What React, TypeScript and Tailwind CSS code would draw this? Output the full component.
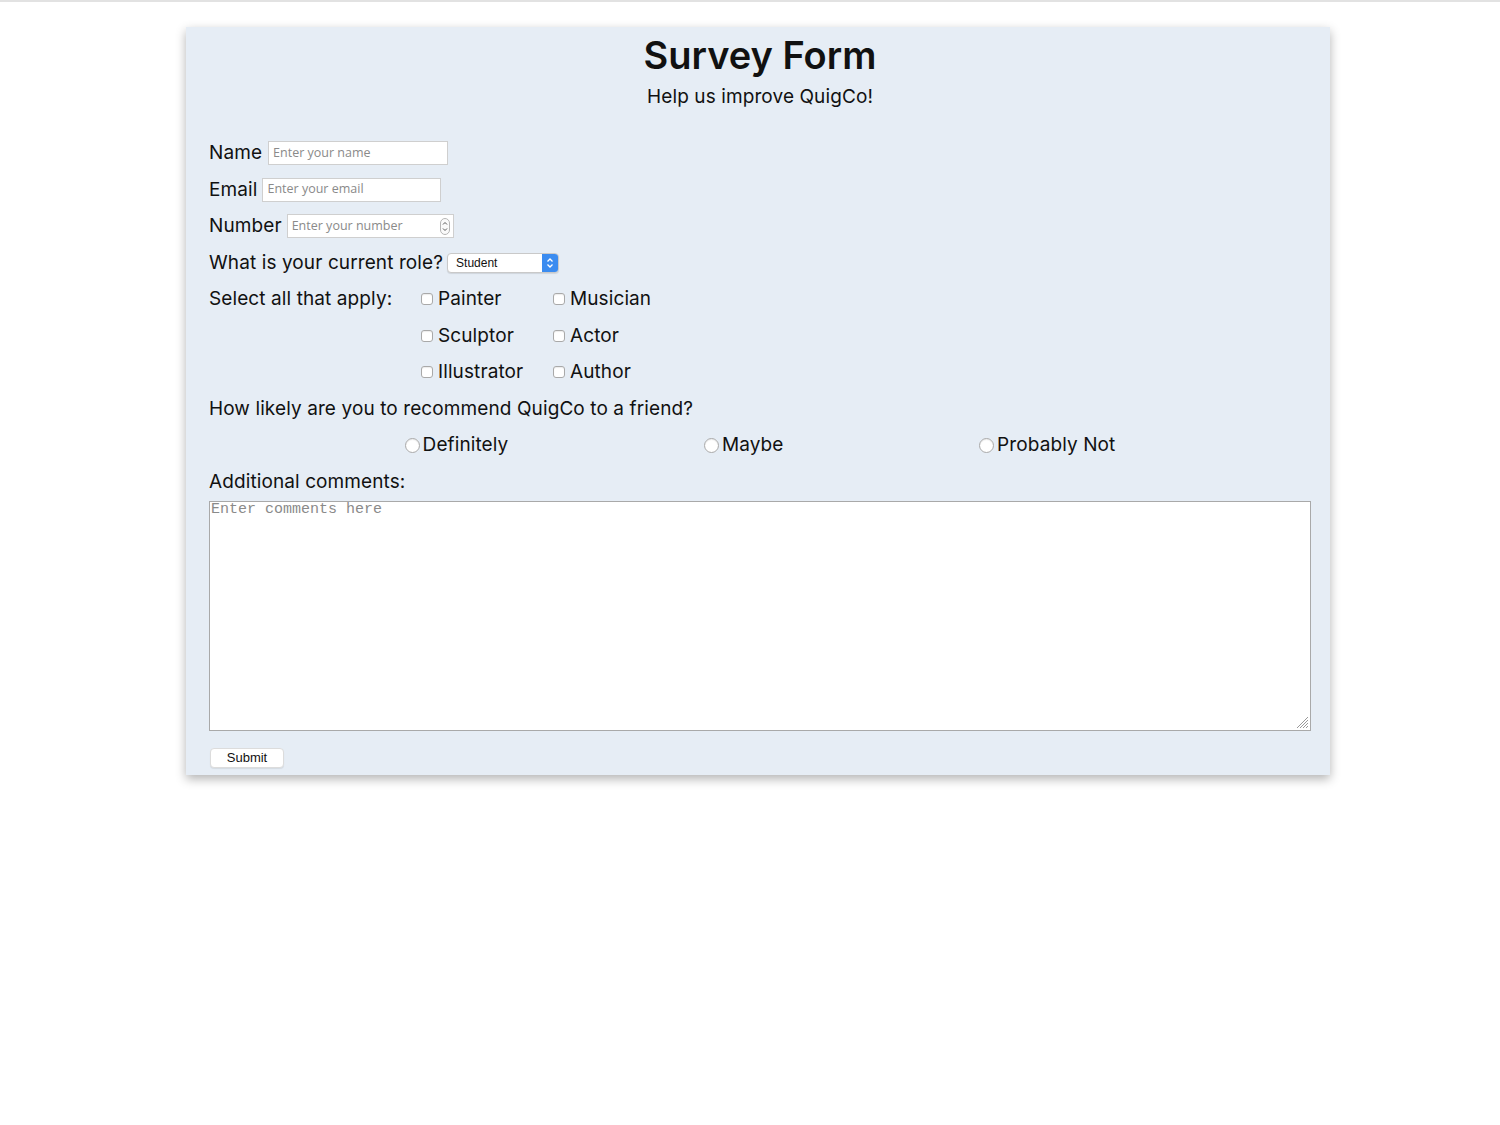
import React from "react";

function Check({ label }: { label: string }) {
  return (
    <label className="flex items-center w-[132px] h-[36.5px]">
      <span className="w-[12px] h-[12px] rounded-[3px] border border-[#a9a9a9] bg-white mr-[5px] shadow-[inset_0_1px_1px_rgba(0,0,0,0.08)]" />
      <span>{label}</span>
    </label>
  );
}

function Radio({ label }: { label: string }) {
  return (
    <label className="flex items-center">
      <span className="w-[15px] h-[15px] rounded-full border border-[#a9a9a9] bg-white mr-[3px] shadow-[inset_0_1px_1px_rgba(0,0,0,0.08)]" />
      <span>{label}</span>
    </label>
  );
}

export default function App() {
  const font = "font-['Inter','Noto_Sans',sans-serif]";
  return (
    <div className={`min-h-[1125px] bg-white ${font} text-[#111]`}>
      <div className="h-[2px] bg-[#e2e2e2]" />
      <div className="pt-[25px]">
        <div className="ml-[186px] w-[1144px] bg-[#e6edf5] shadow-[0_4px_10px_rgba(0,0,0,0.3)] pl-[23px] pr-[19px] pt-[4px] pb-[7px]">
          <h1 className="text-center text-[38px] leading-[48px] font-semibold tracking-[0px]">Survey Form</h1>
          <p className="text-center text-[19px] leading-[28px] mt-[4px] tracking-[0.1px]">Help us improve QuigCo!</p>
          <div className="mt-[24px] text-[19px] tracking-[0.1px]">
            <div className="flex items-center h-[36.5px]">
              <span>Name</span>
              <div className="ml-[6px] w-[180px] h-[24px] bg-white border border-[#cfcfcf] flex items-center px-[4px] text-[12.5px] text-[#8a8a8a] font-['Open_Sans',sans-serif] tracking-normal">Enter your name</div>
            </div>
            <div className="flex items-center h-[36.5px]">
              <span>Email</span>
              <div className="ml-[5px] w-[179px] h-[24px] bg-white border border-[#cfcfcf] flex items-center px-[4px] text-[12.5px] text-[#8a8a8a] font-['Open_Sans',sans-serif] tracking-normal">Enter your email</div>
            </div>
            <div className="flex items-center h-[36.5px]">
              <span>Number</span>
              <div className="ml-[5px] w-[167px] h-[24px] bg-white border border-[#cfcfcf] flex items-center pl-[4px] pr-[3px] text-[12.5px] text-[#8a8a8a] font-['Open_Sans',sans-serif] tracking-normal">
                <span className="flex-1">Enter your number</span>
                <svg width="10" height="17" viewBox="0 0 10 17">
                  <rect x="0.5" y="0.5" width="9" height="16" rx="4.5" fill="#fafafa" stroke="#b5b5b5" />
                  <path d="M3 6.5 L5 4.5 L7 6.5" fill="none" stroke="#555" strokeWidth="1" />
                  <path d="M3 10.5 L5 12.5 L7 10.5" fill="none" stroke="#555" strokeWidth="1" />
                </svg>
              </div>
            </div>
            <div className="flex items-center h-[36.5px]">
              <span>What is your current role?</span>
              <div className="ml-[4px] w-[112px] h-[20px] bg-white border border-[#c9c9c9] rounded-[4px] flex items-center overflow-hidden shadow-[0_1px_1px_rgba(0,0,0,0.1)] tracking-normal">
                <span className="flex-1 pl-[8px] text-[12px] text-[#111] font-['Liberation_Sans',sans-serif]">Student</span>
                <span className="w-[16px] h-full bg-[#3b8cf0] flex items-center justify-center">
                  <svg width="8" height="12" viewBox="0 0 8 12">
                    <path d="M1.5 4.5 L4 2 L6.5 4.5" fill="none" stroke="#fff" strokeWidth="1.3" />
                    <path d="M1.5 7.5 L4 10 L6.5 7.5" fill="none" stroke="#fff" strokeWidth="1.3" />
                  </svg>
                </span>
              </div>
            </div>
            <div className="flex">
              <span className="w-[212px] h-[36.5px] flex items-center">Select all that apply:</span>
              <div className="grid grid-cols-[132px_132px]">
                <Check label="Painter" />
                <Check label="Musician" />
                <Check label="Sculptor" />
                <Check label="Actor" />
                <Check label="Illustrator" />
                <Check label="Author" />
              </div>
            </div>
            <div className="flex items-center h-[36.5px]">How likely are you to recommend QuigCo to a friend?</div>
            <div className="flex items-center justify-evenly h-[36.5px]">
              <Radio label="Definitely" />
              <Radio label="Maybe" />
              <Radio label="Probably Not" />
            </div>
            <div className="flex items-center h-[36.5px]">Additional comments:</div>
            <div className="mt-[1px] relative h-[230px] bg-white border border-[#a9a9a9] px-[1px] tracking-normal">
              <div className="font-['Liberation_Mono',monospace] text-[15px] leading-[16px] text-[#8a8a8a]">Enter comments here</div>
              <svg className="absolute right-[1px] bottom-[1px]" width="14" height="14" viewBox="0 0 14 14">
                <path d="M13 2 L2 13 M13 5 L5 13 M13 8 L8 13 M13 11 L11 13" stroke="#999" strokeWidth="1" />
              </svg>
            </div>
            <div className="mt-[17px]">
              <div className="ml-[1px] w-[74px] h-[20px] bg-white rounded-[4px] border border-[#dcdcdc] shadow-[0_1px_1px_rgba(0,0,0,0.08)] flex items-center justify-center text-[13px] font-['Liberation_Sans',sans-serif] text-[#111] tracking-normal">Submit</div>
            </div>
          </div>
        </div>
      </div>
    </div>
  );
}
